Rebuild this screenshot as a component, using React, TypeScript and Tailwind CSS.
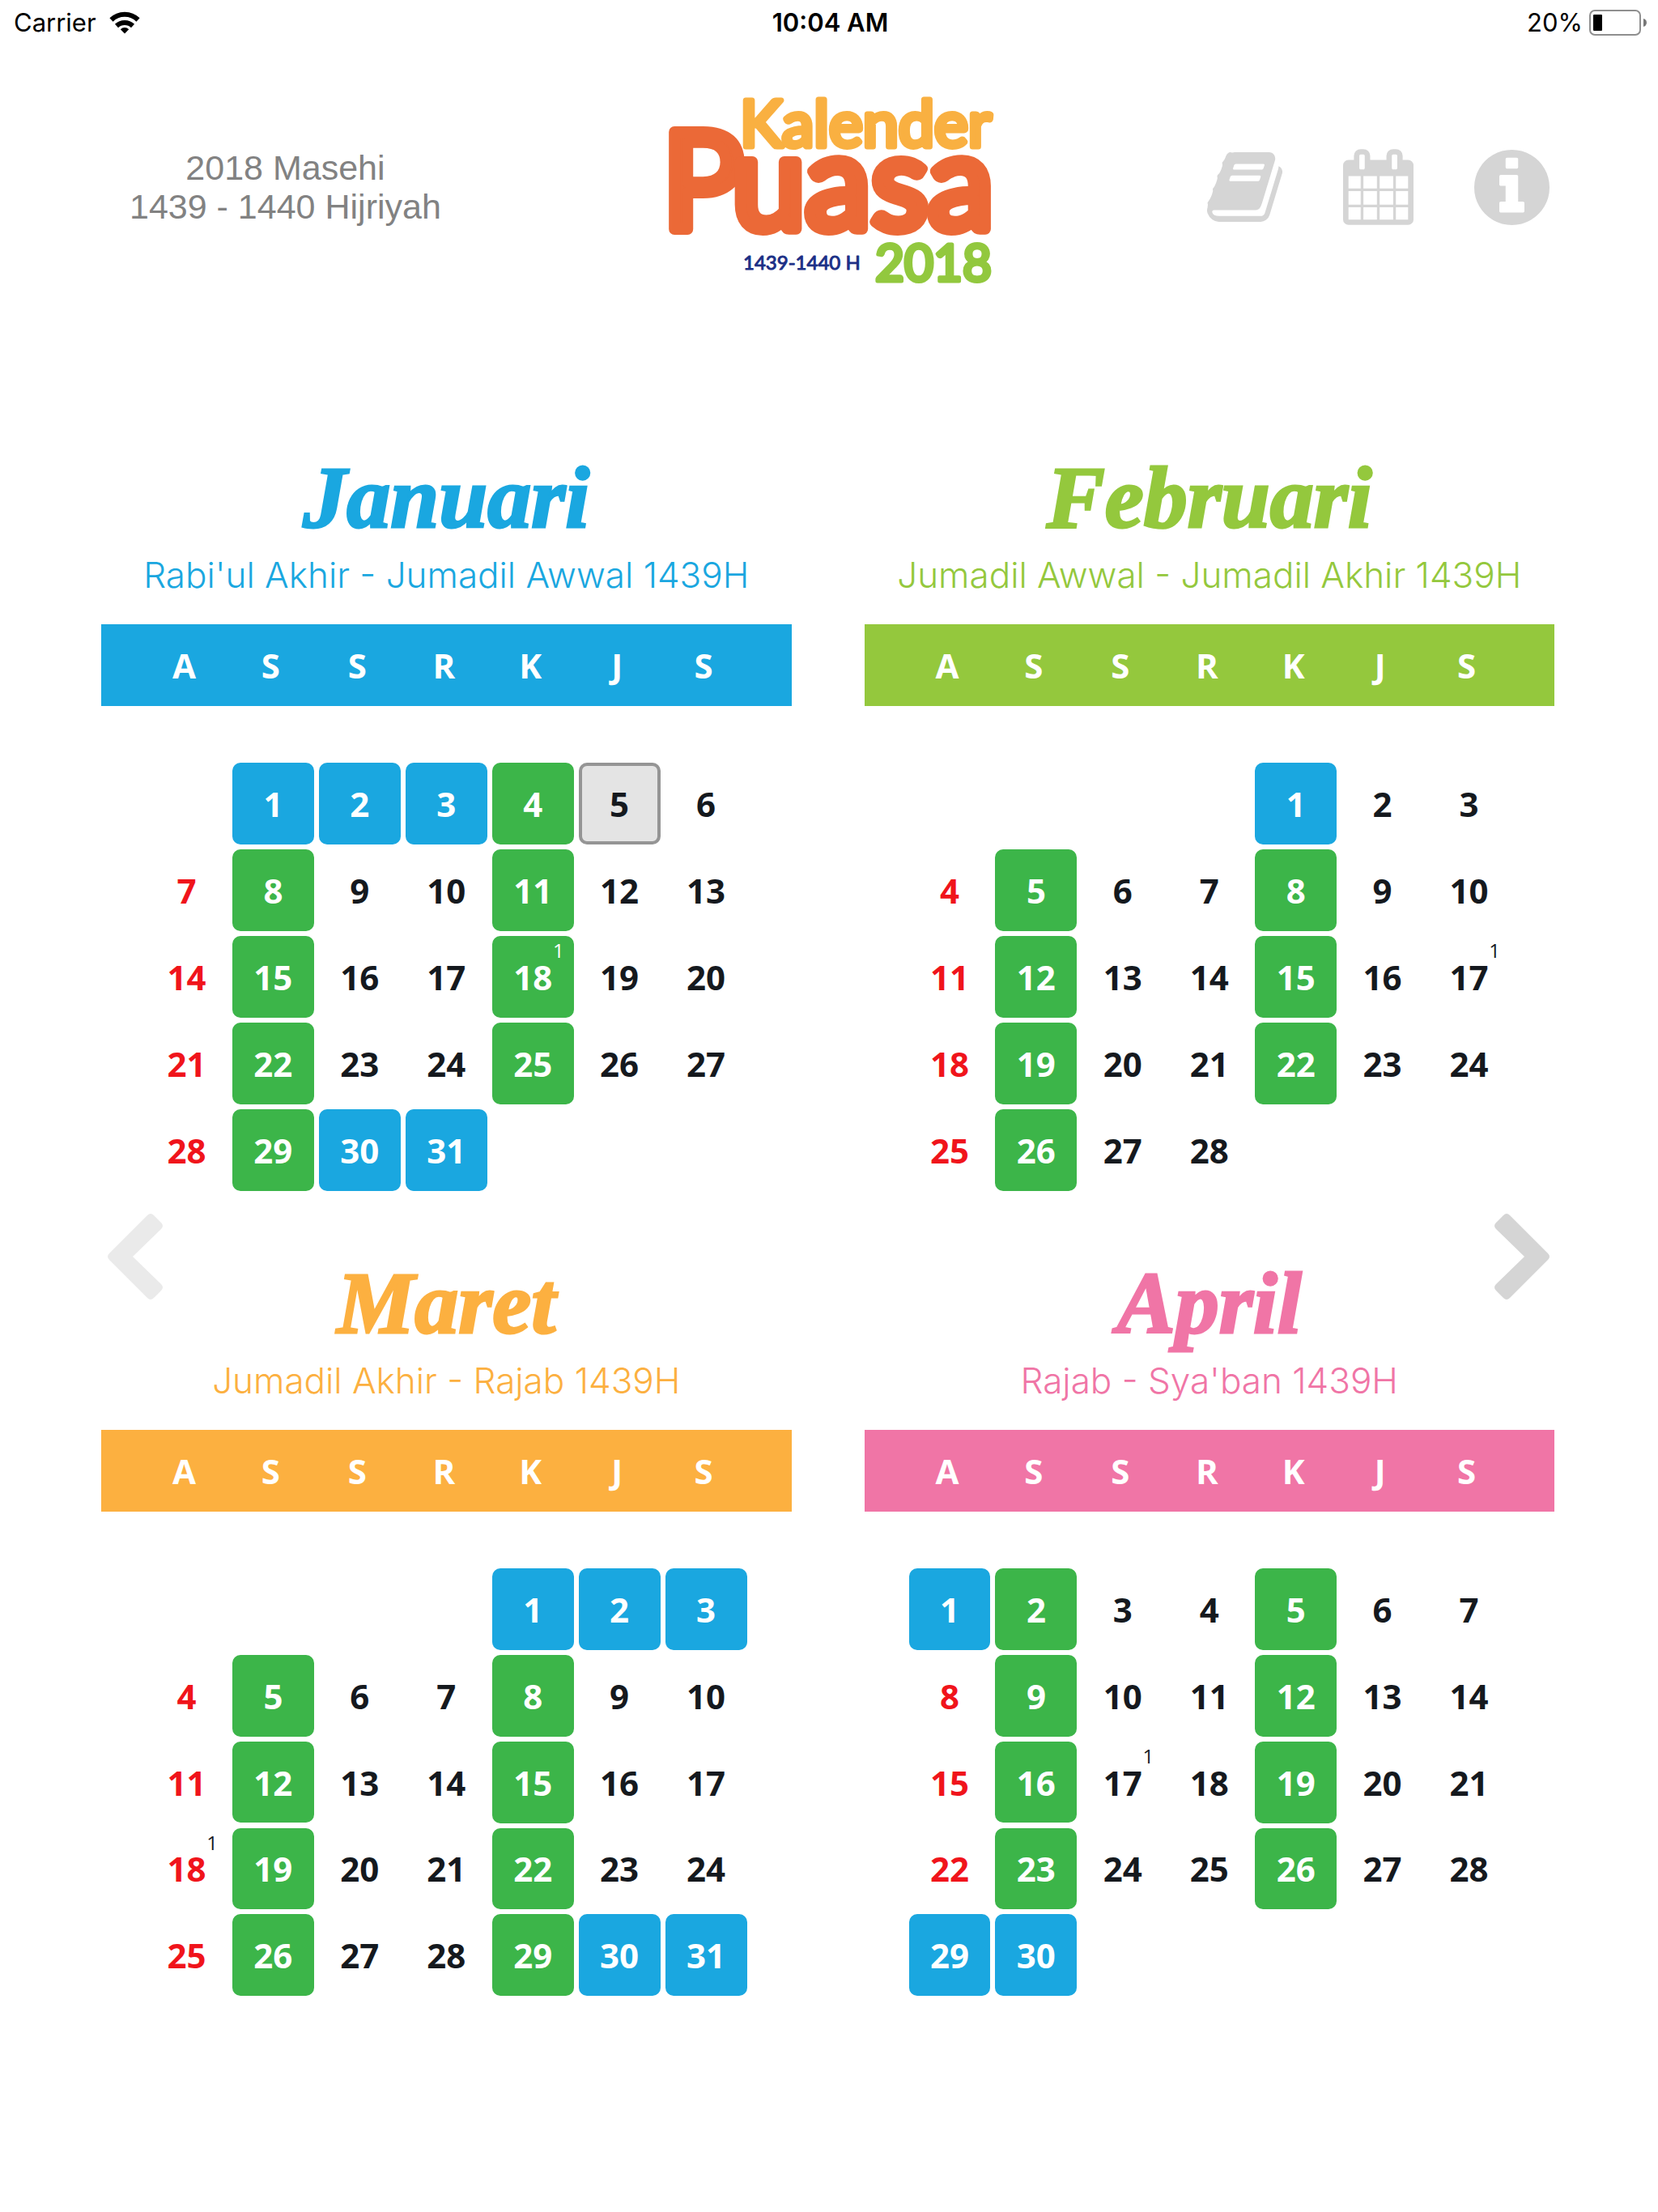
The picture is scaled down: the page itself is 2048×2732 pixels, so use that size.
type Month = {
  name: string;
  hijri: string;
  start: number;
  days: number;
  text: string;
  bar: string;
  blue: number[];
  note: number;
  today?: number;
};

const WEEKDAYS = [
  ["A", "Ahad"],
  ["S", "Senin"],
  ["S", "Selasa"],
  ["R", "Rabu"],
  ["K", "Kamis"],
  ["J", "Jumat"],
  ["S", "Sabtu"],
];

const MONTHS: Month[] = [
  { name: "Januari", hijri: "Rabi'ul Akhir - Jumadil Awwal 1439H", start: 1, days: 31, text: "text-[#1aa7e0]", bar: "bg-[#1aa7e0]", blue: [1, 2, 3, 30, 31], note: 18, today: 5 },
  { name: "Februari", hijri: "Jumadil Awwal - Jumadil Akhir 1439H", start: 4, days: 28, text: "text-[#94c83d]", bar: "bg-[#94c83d]", blue: [1], note: 17 },
  { name: "Maret", hijri: "Jumadil Akhir - Rajab 1439H", start: 4, days: 31, text: "text-[#fcb040]", bar: "bg-[#fcb040]", blue: [1, 2, 3, 30, 31], note: 18 },
  { name: "April", hijri: "Rajab - Sya'ban 1439H", start: 0, days: 30, text: "text-[#f075a6]", bar: "bg-[#f075a6]", blue: [1, 29, 30], note: 17 },
];

function dayStyle(month: Month, day: number, weekday: number) {
  if (day === month.today) return "border-4 border-[#959595] bg-[#e4e4e4] text-[#15191e]";
  if (month.blue.includes(day)) return "bg-[#1aa7e0] text-white";
  if (weekday === 1 || weekday === 4) return "bg-[#3cb549] text-white";
  if (weekday === 0) return "text-[#f0141b]";
  return "text-[#15191e]";
}

function MonthCard({ month }: { month: Month }) {
  const weeks = Array.from({ length: Math.ceil((month.start + month.days) / 7) }, (_, w) =>
    Array.from({ length: 7 }, (_, d) => w * 7 + d - month.start + 1),
  );
  return (
    <section className="flex flex-col">
      <h2 className={`text-center font-['Liberation_Serif',serif] text-[108px] leading-[106px] font-bold italic [-webkit-text-stroke:3px_currentColor] ${month.text}`}>
        {month.name}
      </h2>
      <p className={`mt-[14px] text-center font-['Inter',sans-serif] text-[44px] leading-[56px] font-light whitespace-nowrap ${month.text}`}>
        {month.hijri}
      </p>
      <table aria-label={month.name} className="mt-[33px] block font-['Open_Sans',sans-serif] text-[42px] font-bold">
        <thead className={`block pr-[58px] pl-[52px] text-white ${month.bar}`}>
          <tr className="grid grid-cols-7 gap-[6px]">
            {WEEKDAYS.map(([letter, full], i) => (
              <th key={i} scope="col" abbr={full} className="text-center leading-[101px] font-bold">
                {letter}
              </th>
            ))}
          </tr>
        </thead>
        <tbody className="flex flex-col gap-[6px] px-[55px] pt-[70px]">
          {weeks.map((week, w) => (
            <tr key={w} className="grid grid-cols-7 gap-[6px]">
              {week.map((day, d) => (
                <td key={d} className="aspect-square">
                  {day > 0 && day <= month.days && (
                    <button type="button" className={`relative flex size-full items-center justify-center rounded-[10px] ${dayStyle(month, day, d)}`}>
                      {day}
                      {day === month.note && (
                        <sup className={`absolute top-[6px] right-[12px] text-2xl leading-6 font-normal ${d === 0 ? "text-[#15191e]" : ""}`}>1</sup>
                      )}
                    </button>
                  )}
                </td>
              ))}
            </tr>
          ))}
        </tbody>
      </table>
    </section>
  );
}

function Chevron({ className }: { className: string }) {
  return (
    <svg viewBox="0 0 68 106" className={`h-[106px] w-[68px] ${className}`} fill="currentColor" aria-hidden="true">
      <path d="M49 2Q53 -2 57 2L66 11Q70 15 66 19L31 53L66 87Q70 91 66 95L57 104Q53 108 49 104L2 57Q-2 53 2 49Z" />
    </svg>
  );
}

function StatusBar() {
  return (
    <div className="grid h-14 grid-cols-[1fr_auto_1fr] items-center pr-[14px] pl-[17px] font-['Inter',sans-serif] text-[31px] leading-9 text-black">
      <div className="flex items-center gap-4">
        <span>Carrier</span>
        <svg viewBox="0 0 38 28" className="h-7 w-[38px]" aria-hidden="true">
          <g fill="none" stroke="#000" strokeWidth="6">
            <path d="M2.500 10.500A23.500 23.500 0 0 1 35.500 10.500" />
            <path d="M9 18A14.500 14.500 0 0 1 29 18" />
          </g>
          <path d="M19 27.500L13.800 22.200A7.500 7.500 0 0 1 24.200 22.200Z" />
        </svg>
      </div>
      <span className="font-semibold">10:04 AM</span>
      <div className="flex items-center justify-end gap-2">
        <span>20%</span>
        <svg viewBox="0 0 71 32" className="h-8 w-[71px]" aria-hidden="true">
          <rect x="1" y="1" width="62" height="30" rx="6" fill="none" stroke="#8f8f8f" strokeWidth="2" />
          <rect x="5" y="6" width="11" height="20" rx="1" />
          <path d="M67 11Q71 12 71 16T67 21Z" fill="#777" />
        </svg>
      </div>
    </div>
  );
}

function Logo() {
  return (
    <svg viewBox="0 0 410 260" className="h-[260px] w-full overflow-visible" role="img" aria-label="Kalender Puasa 2018" fontFamily="Lato, sans-serif" fontWeight="400" strokeLinejoin="round">
      <text x="95" y="81" fontSize="79" fill="#f9b041" stroke="#f9b041" strokeWidth="7">Kalender</text>
      <g fill="#eb6937" stroke="#eb6937" strokeWidth="14">
        <text x="-1" y="183" fontSize="166">P</text>
        <text x="85" y="183" fontSize="163">uasa</text>
      </g>
      <text x="262" y="247" fontSize="62" fill="#92c83e" stroke="#92c83e" strokeWidth="5">2018</text>
      <text x="99" y="233" fontSize="24" fill="#1b2f86" stroke="#1b2f86" strokeWidth="1">1439-1440 H</text>
    </svg>
  );
}

const BOOK =
  "M1639 478q40 57 18 129l-275 906q-19 64-76.5 107.5t-122.5 43.5h-923q-77 0-148.5-53.5t-99.5-131.5q-24-67-2-127 0-4 3-27t4-37q1-8-3-21.5t-3-19.5q2-11 8-21t16.5-23.5 16.5-23.5q23-38 45-91.5t30-91.5q3-10 .5-30t-.5-28q3-11 17-28t17-23q21-36 42-92t25-90q1-9-2.5-32t.5-28q4-13 22-30.5t22-22.5q19-26 42.5-84.5t27.5-96.5q1-8-3-25.5t-2-26.5q2-8 9-18t18-23 17-21q8-12 16.5-30.5t15-35 16-36 19.5-32 26.5-23.5 36-11.5 47.5 5.5l-1 3q38-9 51-9h761q74 0 114 56t18 130l-274 906q-36 119-71.5 153.5t-128.5 34.5h-869q-27 0-38 15-11 16-1 43 24 70 144 70h923q29 0 56-15.5t35-41.5l300-987q7-22 5-57 38 15 59 43zm-1064 2q-4 13 2 22.5t20 9.5h608q13 0 25.5-9.5t16.5-22.5l21-64q4-13-2-22.5t-20-9.5h-608q-13 0-25.5 9.5t-16.5 22.5zm-83 256q-4 13 2 22.5t20 9.5h608q13 0 25.5-9.5t16.5-22.5l21-64q4-13-2-22.5t-20-9.5h-608q-13 0-25.5 9.5t-16.5 22.5z";
const CALENDAR =
  "M128 1664h288v-288h-288v288zm352 0h320v-288h-320v288zm-352-352h288v-320h-288v320zm352 0h320v-320h-320v320zm-352-384h288v-288h-288v288zm736 736h320v-288h-320v288zm-384-736h320v-288h-320v288zm768 736h288v-288h-288v288zm-384-352h320v-320h-320v320zm-352-864v-288q0-13-9.5-22.5t-22.5-9.5h-64q-13 0-22.5 9.5t-9.5 22.5v288q0 13 9.5 22.5t22.5 9.5h64q13 0 22.5-9.5t9.5-22.5zm736 864h288v-320h-288v320zm-384-384h320v-288h-320v288zm384 0h288v-288h-288v288zm32-480v-288q0-13-9.5-22.5t-22.5-9.5h-64q-13 0-22.5 9.5t-9.5 22.5v288q0 13 9.5 22.5t22.5 9.5h64q13 0 22.5-9.5t9.5-22.5zm384-64v1280q0 52-38 90t-90 38h-1408q-52 0-90-38t-38-90v-1280q0-52 38-90t90-38h128v-96q0-66 47-113t113-47h64q66 0 113 47t47 113v96h384v-96q0-66 47-113t113-47h64q66 0 113 47t47 113v96h128q52 0 90 38t38 90z";
const INFO =
  "M1152 1376v-160q0-14-9-23t-23-9h-96v-512q0-14-9-23t-23-9h-320q-14 0-23 9t-9 23v160q0 14 9 23t23 9h96v320h-96q-14 0-23 9t-9 23v160q0 14 9 23t23 9h448q14 0 23-9t9-23zm-128-896v-160q0-14-9-23t-23-9h-192q-14 0-23 9t-9 23v160q0 14 9 23t23 9h192q14 0 23-9t9-23zm640 416q0 209-103 385.5t-279.5 279.5-385.5 103-385.5-103-279.5-279.5-103-385.5 103-385.5 279.5-279.5 385.5-103 385.5 103 279.5 279.5 103 385.5z";

export default function App() {
  return (
    <div className="min-h-screen bg-white">
      <StatusBar />
      <header className="grid grid-cols-[1fr_410px_1fr] pt-11">
        <div className="pt-[83px] pl-[160px]">
          <p className="w-fit text-center font-['Liberation_Sans',sans-serif] text-[43px] leading-[48px] whitespace-nowrap text-[#828282]">
            2018 Masehi
            <br />
            1439 - 1440 Hijriyah
          </p>
        </div>
        <Logo />
        <nav className="flex h-[178px] items-center justify-end gap-[75px] pt-[84px] pr-[134px] text-[#d5d5d5]">
          <button type="button" aria-label="Panduan">
            <svg viewBox="0 128 1664 1536" className="h-[86px] w-[93px]" fill="currentColor" aria-hidden="true">
              <path d={BOOK} />
            </svg>
          </button>
          <button type="button" aria-label="Kalender">
            <svg viewBox="0 0 1664 1792" className="h-[94px] w-[87px]" fill="currentColor" aria-hidden="true">
              <path d={CALENDAR} />
            </svg>
          </button>
          <button type="button" aria-label="Info">
            <svg viewBox="128 128 1536 1536" className="size-[93px]" fill="currentColor" aria-hidden="true">
              <path d={INFO} />
            </svg>
          </button>
        </nav>
      </header>
      <main className="relative mt-[202px] pr-[128px] pb-[265px] pl-[125px]">
        <div className="grid grid-cols-2 gap-x-[90px] gap-y-[86px]">
          {MONTHS.map((month) => (
            <MonthCard key={month.name} month={month} />
          ))}
        </div>
        <button type="button" aria-label="Bulan sebelumnya" disabled className="absolute top-[937px] left-[133px] text-[#eaeaea]">
          <Chevron className="" />
        </button>
        <button type="button" aria-label="Bulan berikutnya" className="absolute top-[937px] right-[134px] text-[#d5d5d5]">
          <Chevron className="rotate-180" />
        </button>
      </main>
    </div>
  );
}
